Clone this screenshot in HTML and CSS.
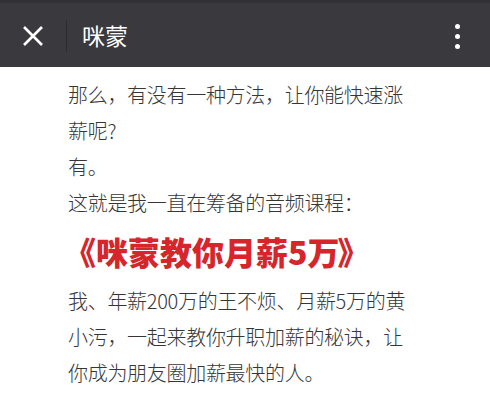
FILE: index.html
```html
<!DOCTYPE html>
<html lang="zh-CN">
<head>
<meta charset="utf-8">
<link rel="stylesheet" href="styles.css">
</head>
<body>
<header class="bar">
  <div class="close">
    <svg width="22" height="22" viewBox="0 0 22 22"><path d="M2 2 L20 20 M20 2 L2 20" stroke="#fff" stroke-width="2.6" stroke-linecap="butt"/></svg>
  </div>
  <div class="divider"></div>
  <div class="title">咪蒙</div>
  <div class="more">
    <span class="dot"></span><span class="dot"></span><span class="dot"></span>
  </div>
</header>
<main class="content">
  <p class="line">那么，有没有一种方法，让你能快速涨<br>薪呢?</p>
  <p class="line">有。</p>
  <p class="line">这就是我一直在筹备的音频课程：</p>
  <p class="headline"><span class="lq">《</span>咪蒙教你月薪5万<span class="rq">》</span></p>
  <p class="line">我、年薪200万的王不烦、月薪5万的黄<br>小污，一起来教你升职加薪的秘诀，让<br>你成为朋友圈加薪最快的人。</p>
</main>
</body>
</html>
```
FILE: styles.css
```css
html, body {
  margin: 0;
  padding: 0;
  background: #fff;
  width: 490px;
  height: 402px;
  overflow: hidden;
  font-family: "Noto Sans CJK SC", "Noto Sans", sans-serif;
}
.bar {
  height: 67px;
  background: #3a393e;
  border-top: 3px solid #323136;
  box-sizing: border-box;
  display: flex;
  align-items: center;
}
.close {
  width: 22px;
  height: 22px;
  margin-left: 22px;
  margin-top: 2px;
  display: flex;
}
.divider {
  width: 1px;
  height: 32px;
  background: #2c2b30;
  margin-left: 22px;
  margin-top: 2px;
}
.title {
  color: #fff;
  font-size: 23px;
  margin-left: 15px;
  line-height: 1;
  margin-top: 1px;
}
.more {
  margin-left: auto;
  margin-right: 30px;
  display: flex;
  flex-direction: column;
  gap: 5px;
  margin-top: 2px;
}
.dot {
  width: 5px;
  height: 5px;
  border-radius: 50%;
  background: #fff;
}
.content {
  padding: 10px 0 0 68px;
  color: #363636;
}
.line {
  margin: 0;
  font-size: 20px;
  line-height: 36px;
  font-weight: 300;
  letter-spacing: -0.3px;
}
.headline {
  margin: 2px 0 4px 0;
  font-size: 32px;
  line-height: 56px;
  font-weight: 900;
  color: #d6262c;
}
.lq {
  display: inline-block;
  margin-left: -4px;
}
.rq {
  display: inline-block;
  margin-left: -2px;
}
```
